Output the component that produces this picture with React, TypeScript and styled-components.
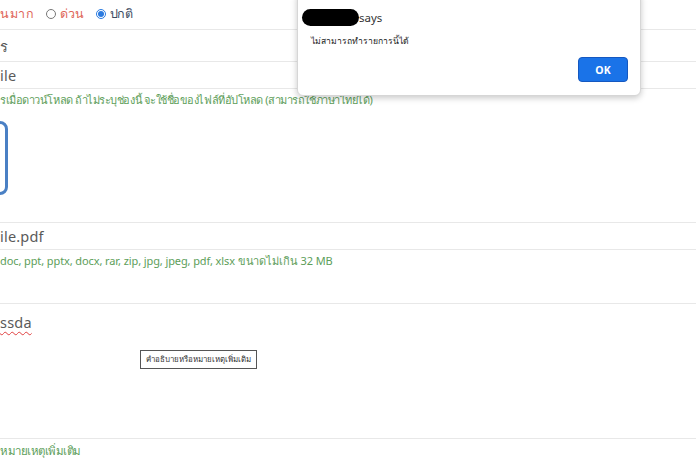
import React from "react";
import styled, { createGlobalStyle } from "styled-components";

const Global = createGlobalStyle`
  html, body { margin: 0; padding: 0; background: #fff; }
  body { font-family: "Noto Sans", "DejaVu Sans", sans-serif; color: #444; overflow: hidden; }
  * { box-sizing: border-box; }
`;

const Page = styled.div`
  position: relative;
  width: 696px;
  height: 464px;
  overflow: hidden;
`;

const Form = styled.div`
  display: flex;
  flex-direction: column;
`;

const Row = styled.div<{ $h: number }>`
  height: ${(p) => p.$h}px;
  border-bottom: 1px solid #e8e8e8;
  display: flex;
  flex-direction: column;
  position: relative;
`;

const Value = styled.div<{ $pt?: number }>`
  font-size: 14.5px;
  line-height: 20px;
  letter-spacing: 0.2px;
  color: #5a5a5a;
  padding-top: ${(p) => p.$pt ?? 6}px;
`;

const Hint = styled.div<{ $ls?: number; $fs?: number; $pt?: number }>`
  font-size: ${(p) => p.$fs ?? 11}px;
  letter-spacing: ${(p) => p.$ls ?? 0}px;
  line-height: 16px;
  color: #5d9e5a;
  padding-top: ${(p) => p.$pt ?? 3}px;
  white-space: nowrap;
`;

const RadioLine = styled.div`
  display: flex;
  align-items: center;
  gap: 4px;
  height: 29px;
  font-size: 12.5px;
  padding-bottom: 2px;
`;

const Label = styled.span<{ $c: string; $ls?: number }>`
  color: ${(p) => p.$c};
  letter-spacing: ${(p) => p.$ls ?? -0.3}px;
`;

const RadioDot = styled.span<{ $on?: boolean }>`
  width: 10px;
  height: 10px;
  border-radius: 50%;
  border: 1px solid ${(p) => (p.$on ? "#2b7be0" : "#777")};
  display: inline-flex;
  align-items: center;
  justify-content: center;
  margin-left: 8px;
  &::after {
    content: "";
    width: 6px;
    height: 6px;
    border-radius: 50%;
    background: ${(p) => (p.$on ? "#2b7be0" : "transparent")};
  }
`;

const DropBox = styled.div`
  margin-left: -60px;
  margin-top: 13px;
  width: 68px;
  height: 74px;
  border: 3px solid #4a80c4;
  border-radius: 8px;
`;

const Misspelled = styled.span`
  text-decoration: underline wavy #e04040;
  text-decoration-thickness: 1px;
  text-underline-offset: 3px;
`;

const Tip = styled.div`
  position: absolute;
  left: 140px;
  top: 46px;
  padding: 2px 5px;
  font-size: 7.9px;
  line-height: 13px;
  color: #333;
  background: #fff;
  border: 1px solid #555;
  white-space: nowrap;
`;

const Dialog = styled.div`
  position: absolute;
  left: 297px;
  top: -8px;
  width: 344px;
  height: 104px;
  background: #fff;
  border: 1px solid #d6d6d6;
  border-radius: 6px;
  box-shadow: 0 2px 6px rgba(0, 0, 0, 0.22);
  display: flex;
  flex-direction: column;
  padding: 15px 12px 0 4px;
`;

const Title = styled.div`
  display: flex;
  align-items: center;
  font-size: 11.5px;
  color: #333;
  height: 18px;
`;

const Redact = styled.span`
  width: 57px;
  height: 17px;
  border-radius: 9px;
  background: #000;
  display: inline-block;
`;

const Message = styled.div`
  font-size: 8.6px;
  color: #222;
  margin-top: 8px;
  padding-left: 9px;
`;

const Actions = styled.div`
  display: flex;
  justify-content: flex-end;
  margin-top: 9px;
`;

const OkButton = styled.button`
  width: 50px;
  height: 25px;
  border: 1px solid #1558c0;
  border-radius: 4px;
  background: #1a73e8;
  color: #fff;
  font-family: "Noto Sans", sans-serif;
  font-weight: 700;
  font-size: 10.5px;
  padding: 0;
`;

export default function App() {
  return (
    <Page>
      <Global />
      <Form>
        <Row $h={30}>
          <RadioLine>
            <Label $c="#e0675a" $ls={0.6}>นมาก</Label>
            <RadioDot />
            <Label $c="#e0675a">ด่วน</Label>
            <RadioDot $on />
            <Label $c="#3b4a60">ปกติ</Label>
          </RadioLine>
        </Row>
        <Row $h={32}>
          <Value>ร</Value>
        </Row>
        <Row $h={27}>
          <Value $pt={3}>ile</Value>
        </Row>
        <Row $h={134}>
          <Hint $ls={-0.45}>รเมื่อดาวน์โหลด ถ้าไม่ระบุช่องนี้ จะใช้ชื่อของไฟล์ที่อัปโหลด (สามารถใช้ภาษาไทยได้)</Hint>
          <DropBox />
        </Row>
        <Row $h={27}>
          <Value $pt={3}>ile.pdf</Value>
        </Row>
        <Row $h={54}>
          <Hint $ls={-0.1}>doc, ppt, pptx, docx, rar, zip, jpg, jpeg, pdf, xlsx ขนาดไม่เกิน 32 MB</Hint>
        </Row>
        <Row $h={135}>
          <Value $pt={8}>
            <Misspelled>ssda</Misspelled>
          </Value>
          <Tip>คำอธิบายหรือหมายเหตุเพิ่มเติม</Tip>
        </Row>
        <Hint $fs={11.5} $ls={-0.5} $pt={4}>หมายเหตุเพิ่มเติม</Hint>
      </Form>
      <Dialog>
        <Title>
          <Redact />
          <span>says</span>
        </Title>
        <Message>ไม่สามารถทำรายการนี้ได้</Message>
        <Actions>
          <OkButton>OK</OkButton>
        </Actions>
      </Dialog>
    </Page>
  );
}
